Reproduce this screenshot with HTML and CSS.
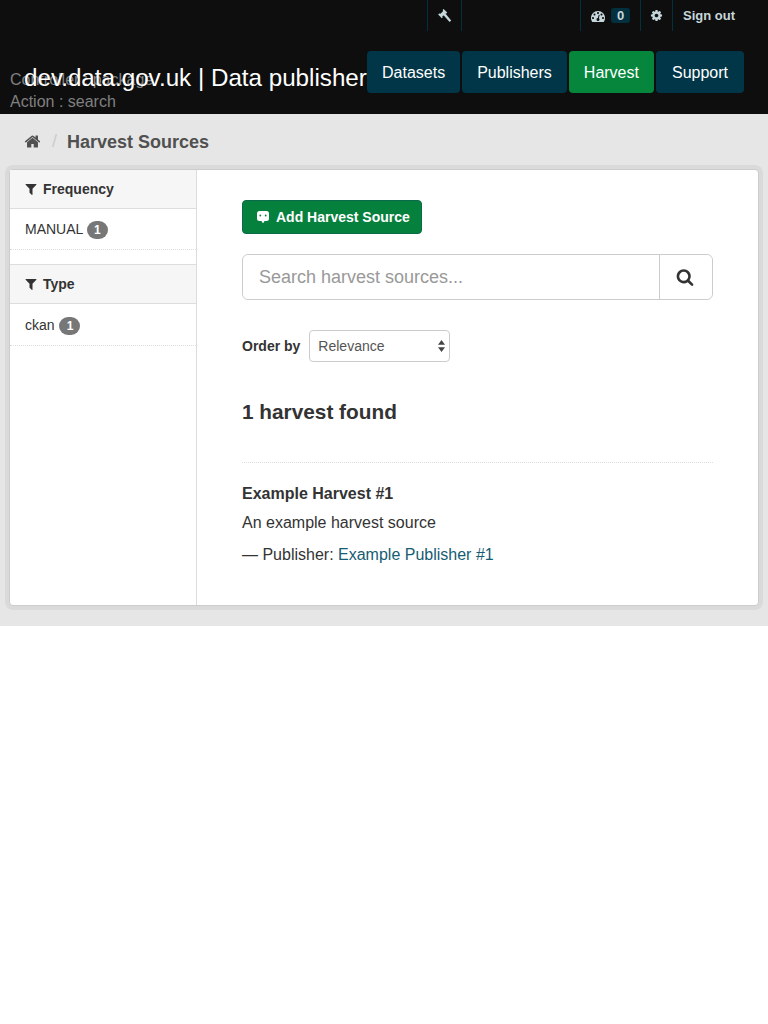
FILE: index.html
```html
<!DOCTYPE html>
<html lang="en">
<head>
  <meta charset="UTF-8">
  <title>Harvest Sources - dev.data.gov.uk</title>
  <link rel="stylesheet" href="styles.css">
</head>
<body>

  <header class="masthead">
    <div class="debug">
      <div>Controller : package</div>
      <div>Action : search</div>
    </div>

    <div class="account">
      <a class="account-item tool" href="#">
        <svg class="icon" viewBox="0 0 14 14"><path d="M1 4.500 2.500 4.800 5 2.200 4.800 .8 5.600 0 9.200 3.600 8.400 4.600 7.400 4.500 13.200 11.400 11.600 13 5.800 6.400 4.400 7 4.600 8.400 3.800 9.200 .2 5.400z"/></svg>
      </a>
      <a class="account-item stats" href="#">
        <svg class="icon gauge" viewBox="0 0 1792 1792"><path d="M384 1152q0-53-37.500-90.500t-90.500-37.500-90.500 37.500-37.500 90.500 37.500 90.500 90.500 37.500 90.500-37.500 37.500-90.500zm192-448q0-53-37.500-90.500t-90.500-37.500-90.500 37.500-37.500 90.500 37.500 90.500 90.500 37.500 90.500-37.500 37.500-90.500zm428 481l101-382q6-26-7.500-48.500t-38.500-29.500-48 6.500-30 39.500l-101 382q-60 5-107 43.500t-63 98.500q-20 77 20 146t117 89 146-20 89-117q16-60-6-117t-72-91zm660-33q0-53-37.500-90.500t-90.500-37.500-90.500 37.500-37.500 90.500 37.500 90.500 90.500 37.500 90.500-37.500 37.500-90.500zm-640-640q0-53-37.500-90.500t-90.500-37.500-90.500 37.500-37.500 90.500 37.500 90.500 90.500 37.500 90.500-37.500 37.500-90.500zm448 192q0-53-37.500-90.500t-90.500-37.500-90.500 37.500-37.500 90.500 37.500 90.500 90.500 37.500 90.500-37.500 37.500-90.500zm320 448q0 261-141 483-19 29-54 29h-1402q-35 0-54-29-141-221-141-483 0-182 71-348t191-286 286-191 348-71 348 71 286 191 191 286 71 348z"/></svg>
        <span class="stats-count">0</span>
      </a>
      <a class="account-item cog" href="#">
        <svg class="icon" viewBox="0 0 1792 1792"><path d="M1152 896q0-106-75-181t-181-75-181 75-75 181 75 181 181 75 181-75 75-181zm512-109v222q0 12-8 23t-20 13l-185 28q-19 54-39 91 35 50 107 138 10 12 10 25t-9 23q-27 37-99 108t-94 71q-12 0-26-9l-138-108q-44 23-91 38-16 136-29 186-7 28-36 28h-222q-14 0-24.500-8.500t-11.500-21.500l-28-184q-49-16-90-37l-141 107q-10 9-25 9-14 0-25-11-126-114-165-168-7-10-7-23 0-12 8-23 15-21 51-66.500t54-70.500q-27-50-41-99l-183-27q-13-2-21-12.500t-8-23.500v-222q0-12 8-23t19-13l186-28q14-46 39-92-40-57-107-138-10-12-10-24 0-10 9-23 26-36 98.500-107.500t94.500-71.500q13 0 26 10l138 107q44-23 91-38 16-136 29-186 7-28 36-28h222q14 0 24.500 8.500t11.500 21.500l28 184q49 16 90 37l142-107q9-9 24-9 13 0 25 10 129 119 165 170 7 8 7 22 0 12-8 23-15 21-51 66.500t-54 70.500q26 50 41 98l183 28q13 2 21 12.500t8 23.500z"/></svg>
      </a>
      <a class="account-item signout" href="#">Sign out</a>
    </div>

    <div class="navbar">
      <a class="site-title" href="#">dev.data.gov.uk | Data publisher</a>
      <nav class="site-nav">
        <a href="#">Datasets</a>
        <a href="#">Publishers</a>
        <a class="active" href="#">Harvest</a>
        <a class="last" href="#">Support</a>
      </nav>
    </div>
  </header>

  <div class="main">
    <div class="toolbar">
      <svg class="home" viewBox="0 0 1792 1792"><path d="M1472 992v480q0 26-19 45t-45 19h-384v-384h-256v384h-384q-26 0-45-19t-19-45v-480q0-1 .5-3t.5-3l575-474 575 474q1 2 1 6zm223-69l-62 74q-8 9-21 11h-3q-13 0-21-7l-692-577-692 577q-12 8-24 7-13-2-21-11l-62-74q-8-10-7-23.500t11-21.500l719-599q32-26 76-26t76 26l244 204v-195q0-14 9-23t23-9h192q14 0 23 9t9 23v408l219 182q10 8 11 21.500t-7 23.500z"/></svg>
      <span class="crumb-sep">/</span>
      <span class="crumb">Harvest Sources</span>
    </div>

    <div class="wrapper">
      <aside class="sidebar">
        <section class="facet">
          <h2 class="facet-title">
            <svg class="filter" viewBox="0 0 1792 1792"><path d="M1595 295q17 41-14 70l-493 493v742q0 42-39 59-13 5-25 5-27 0-45-19l-256-256q-19-19-19-45v-486l-493-493q-31-29-14-70 17-39 59-39h1280q42 0 59 39z"/></svg>
            Frequency
          </h2>
          <div class="facet-item">MANUAL <span class="badge">1</span></div>
        </section>
        <section class="facet">
          <h2 class="facet-title">
            <svg class="filter" viewBox="0 0 1792 1792"><path d="M1595 295q17 41-14 70l-493 493v742q0 42-39 59-13 5-25 5-27 0-45-19l-256-256q-19-19-19-45v-486l-493-493q-31-29-14-70 17-39 59-39h1280q42 0 59 39z"/></svg>
            Type
          </h2>
          <div class="facet-item">ckan <span class="badge">1</span></div>
        </section>
      </aside>

      <div class="content">
        <a class="btn-add" href="#">
          <svg class="add-icon" viewBox="0 0 12 12"><path d="M2.500 0h7A2.500 2.500 0 0 1 12 2.500v5A2.500 2.500 0 0 1 9.500 10H7.500L6.600 11.800H5.400L4.500 10H2.500A2.500 2.500 0 0 1 0 7.500v-5A2.500 2.500 0 0 1 2.500 0z"/><circle class="add-eye" cx="3.300" cy="4.500" r=".9"/><circle class="add-eye" cx="8.700" cy="4.500" r=".9"/></svg>
          Add Harvest Source
        </a>

        <form class="search">
          <input type="text" placeholder="Search harvest sources...">
          <button type="button">
            <svg viewBox="0 0 1792 1792"><path d="M1216 832q0-185-131.500-316.500t-316.500-131.500-316.500 131.500-131.500 316.500 131.500 316.500 316.500 131.500 316.500-131.500 131.500-316.500zm512 832q0 52-38 90t-90 38q-54 0-90-38l-343-342q-179 124-399 124-143 0-273.500-55.500t-225-150-150-225-55.500-273.500 55.500-273.500 150-225 225-150 273.500-55.500 273.500 55.500 225 150 150 225 55.500 273.500q0 220-124 399l343 343q37 37 37 90z"/></svg>
          </button>
        </form>

        <div class="order">
          <label for="order">Order by</label>
          <div class="select-wrap">
            <select id="order">
              <option>Relevance</option>
            </select>
            <svg class="select-arrows" viewBox="0 0 7 12"><path d="M3.500 0 7 4.800H0zM3.500 12 0 7.200h7z"/></svg>
          </div>
        </div>

        <h1 class="results">1 harvest found</h1>

        <div class="source">
          <h3>Example Harvest #1</h3>
          <p>An example harvest source</p>
          <p class="publisher">— Publisher: <a href="#">Example Publisher #1</a></p>
        </div>
      </div>
    </div>
  </div>

</body>
</html>
```

FILE: styles.css
```css
body {
  margin: 0;
  background: #fff;
  color: #333;
  font-family: "Liberation Sans", Arial, sans-serif;
  font-size: 14px;
}
a {
  text-decoration: none;
}

/* header */
.masthead {
  position: relative;
  height: 114px;
  padding-right: 24px;
  box-sizing: border-box;
  background: #0e0e0e;
}
.debug {
  position: absolute;
  left: 10px;
  top: 69px;
  font-size: 16px;
  line-height: 22px;
  color: #808080;
}
.account {
  display: flex;
  height: 31px;
  padding-left: 427px;
}
.account-item {
  display: flex;
  align-items: center;
  justify-content: center;
  box-sizing: border-box;
  height: 31px;
  border-left: 1px solid #03303f;
  color: #c6d7db;
  font-size: 13px;
  font-weight: bold;
}
.icon {
  width: 14px;
  height: 14px;
  fill: #c6d7db;
}
.tool {
  width: 35px;
  border-right: 1px solid #03303f;
}
.stats {
  justify-content: flex-start;
  width: 60px;
  margin-left: 118px;
  padding-left: 10px;
  gap: 6px;
}
.stats-count {
  padding: 0 6px;
  line-height: 15px;
  border-radius: 3px;
  background: #03303f;
  font-size: 13px;
}
.cog {
  width: 32px;
}
.cog .icon {
  width: 13px;
  height: 13px;
}
.signout {
  justify-content: flex-start;
  padding-left: 10px;
}
.navbar {
  position: relative;
  display: flex;
  align-items: flex-start;
  justify-content: space-between;
  margin-top: 20px;
  padding-left: 24px;
}
.site-title {
  flex: none;
  padding-top: 11px;
  color: #fff;
  font-size: 24.2px;
  line-height: 32px;
  white-space: nowrap;
}
.site-nav {
  display: flex;
  gap: 2px;
}
.site-nav a {
  padding: 1px 15px 0;
  line-height: 41px;
  border-radius: 4px;
  background: #003647;
  color: #fff;
  font-size: 16px;
}
.site-nav a.last {
  padding: 1px 16px 0;
}
.site-nav a.active {
  background: #05863c;
}

/* breadcrumb */
.main {
  padding: 0 9px 20px;
  background: #e6e6e6;
}
.toolbar {
  display: flex;
  align-items: center;
  height: 55px;
  padding-left: 15px;
}
.home {
  width: 17px;
  height: 17px;
  fill: #505050;
}
.crumb-sep {
  margin: 0 10px 0 11px;
  color: #ccc;
  font-size: 18px;
}
.crumb {
  margin-top: 1px;
  color: #505050;
  font-size: 18px;
  font-weight: bold;
}

/* wrapper */
.wrapper {
  display: flex;
  min-height: 437px;
  box-sizing: border-box;
  border: 1px solid #ccc;
  border-radius: 4px;
  background: #fff;
  box-shadow: 0 0 0 4px rgba(0,0,0,0.05);
}
.sidebar {
  width: 187px;
  flex: none;
  box-sizing: border-box;
  border-right: 1px solid #ddd;
}
.facet {
  margin-bottom: 14px;
}
.facet-title {
  display: flex;
  align-items: center;
  gap: 5px;
  margin: 0;
  height: 38px;
  padding-left: 14px;
  border-bottom: 1px solid #ddd;
  background: #f6f6f6;
  font-size: 14px;
}
.facet + .facet .facet-title {
  border-top: 1px solid #ddd;
}
.filter {
  width: 14px;
  height: 14px;
  fill: #333;
}
.facet-item {
  height: 41px;
  line-height: 40px;
  box-sizing: border-box;
  padding-left: 15px;
  border-bottom: 1px dotted #ddd;
}
.facet + .facet .facet-item {
  height: 42px;
  line-height: 42px;
}
.facet + .facet .badge {
  margin-left: 1px;
}
.badge {
  display: inline-block;
  min-width: 7px;
  padding: 0 7px;
  line-height: 18px;
  border-radius: 10px;
  background: #777;
  color: #fff;
  font-size: 12px;
  font-weight: bold;
  text-align: center;
}

/* content */
.content {
  flex: 1;
  padding: 30px 45px 0;
}
.btn-add {
  display: inline-flex;
  align-items: center;
  gap: 7px;
  box-sizing: border-box;
  height: 34px;
  padding: 0 11px 0 14px;
  border: 1px solid #0a6a49;
  border-radius: 4px;
  background: #05803d;
  color: #fff;
  font-weight: bold;
}
.add-icon {
  width: 12px;
  height: 12px;
  fill: #fff;
}
.add-eye {
  fill: #05803d;
}
.search {
  display: flex;
  height: 46px;
  margin-top: 20px;
  box-sizing: border-box;
  border: 1px solid #ccc;
  border-radius: 6px;
}
.search input {
  flex: 1;
  min-width: 0;
  padding: 0 16px;
  border: none;
  border-radius: 6px;
  outline: none;
  font-family: inherit;
  font-size: 18px;
}
.search input::placeholder {
  color: #999;
}
.search button {
  display: flex;
  align-items: center;
  justify-content: center;
  width: 53px;
  padding: 0 2px 0 0;
  border: none;
  border-left: 1px solid #ccc;
  border-radius: 0 6px 6px 0;
  background: #fff;
}
.search svg {
  width: 18px;
  height: 18px;
  fill: #333;
}
.order {
  display: flex;
  align-items: center;
  gap: 9px;
  margin-top: 30px;
}
.order label {
  font-weight: bold;
}
.select-wrap {
  position: relative;
  width: 141px;
}
.select-wrap select {
  display: block;
  width: 100%;
  height: 32px;
  padding: 0 8px;
  border: 1px solid #ccc;
  border-radius: 4px;
  background: #fff;
  appearance: none;
  color: #555;
  font-family: inherit;
  font-size: 14px;
}
.select-arrows {
  position: absolute;
  right: 5px;
  top: 10px;
  width: 7px;
  height: 12px;
  fill: #444;
}
.results {
  margin: 38px 0 0;
  font-size: 20.8px;
  line-height: 24px;
}
.source {
  margin-top: 38px;
  padding-top: 20px;
  border-top: 1px dotted #ddd;
  font-size: 16px;
}
.source h3 {
  margin: 0;
  font-size: 16px;
  line-height: 22px;
}
.source p {
  margin: 7px 0 0;
  line-height: 22px;
}
.source .publisher {
  margin-top: 10px;
}
.publisher a {
  color: #165c73;
}
```
